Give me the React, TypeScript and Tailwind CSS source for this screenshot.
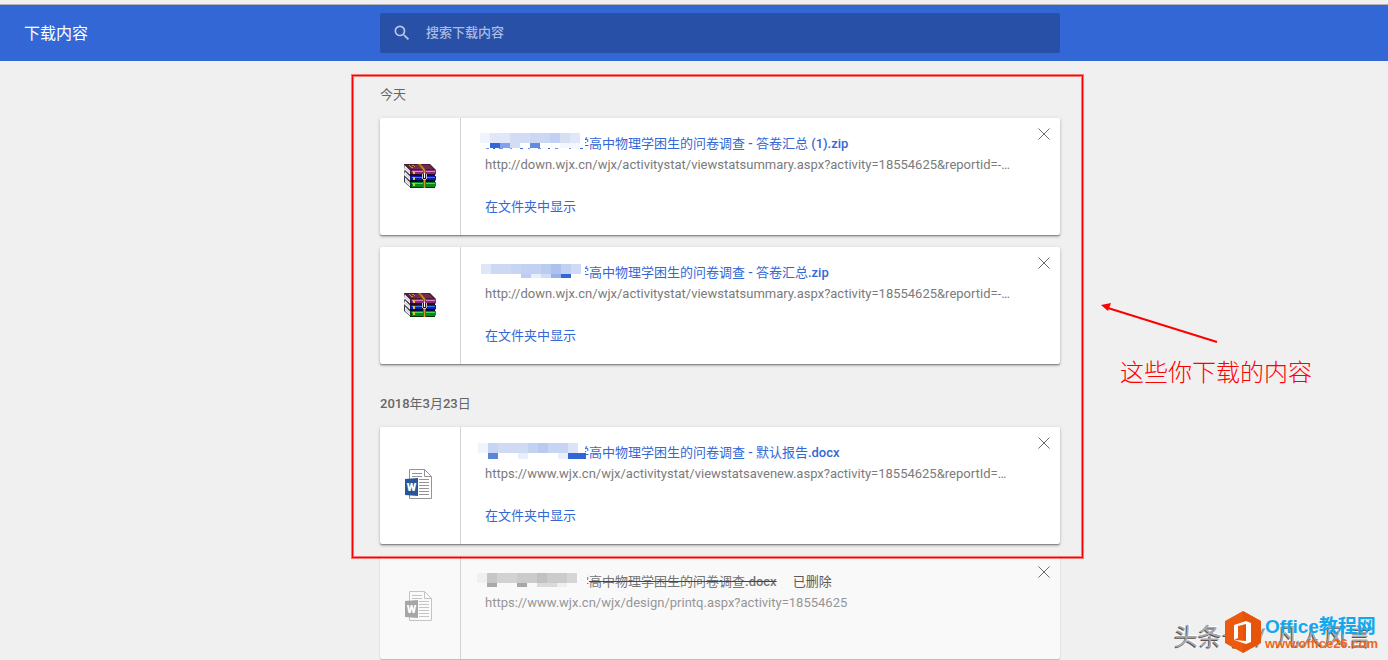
import clsx from 'clsx';

type FileKind = 'zip' | 'docx';

// [x, y, width, height, colour] of one block of the pixelated prefix
type Block = [number, number, number, number, string];

interface Download {
  id: number;
  kind: FileKind;
  name: string;
  url: string;
  blocks: Block[];
  removed?: boolean;
}

interface DownloadGroup {
  date: string;
  items: Download[];
}

const groups: DownloadGroup[] = [
  {
    date: '今天',
    items: [
      {
        id: 1,
        kind: 'zip',
        name: '高中物理学困生的问卷调查 - 答卷汇总 (1).zip',
        url: 'http://down.wjx.cn/wjx/activitystat/viewstatsummary.aspx?activity=18554625&reportid=-…',
        blocks: [
          [3, 1, 10, 10, '#f0f4fd'],
          [13, 1, 20, 10, '#e0e7f8'],
          [33, 1, 20, 10, '#d2dcf5'],
          [53, 1, 20, 10, '#cbd8f4'],
          [73, 1, 10, 10, '#c2d0f3'],
          [83, 1, 10, 10, '#d6e0f5'],
          [93, 1, 10, 10, '#e0e7f8'],
          [13, 11, 10, 5, '#3367d6'],
          [23, 11, 10, 5, '#84a2e5'],
          [33, 11, 10, 5, '#d2dcf5'],
          [53, 11, 10, 5, '#628be0'],
          [83, 11, 20, 5, '#f4f7fd'],
          [9, 16, 3, 1, '#6f93e2'],
          [16, 16, 2, 1, '#3367d6'],
          [22, 16, 4, 1, '#6f93e2'],
          [33, 16, 2, 1, '#6f93e2'],
          [43, 16, 3, 1, '#3367d6'],
          [51, 16, 2, 1, '#6f93e2'],
          [61, 16, 3, 1, '#6f93e2'],
          [71, 16, 2, 1, '#3367d6'],
          [78, 16, 3, 1, '#6f93e2'],
          [92, 16, 2, 1, '#6f93e2'],
          [103, 16, 3, 1, '#3367d6'],
        ],
      },
      {
        id: 2,
        kind: 'zip',
        name: '高中物理学困生的问卷调查 - 答卷汇总.zip',
        url: 'http://down.wjx.cn/wjx/activitystat/viewstatsummary.aspx?activity=18554625&reportid=-…',
        blocks: [
          [4, 3, 10, 10, '#dee6f8'],
          [14, 3, 20, 10, '#cdd9f4'],
          [34, 3, 10, 10, '#c7d4f3'],
          [44, 3, 20, 10, '#c2d0f2'],
          [64, 3, 10, 10, '#bacbf0'],
          [74, 3, 10, 10, '#acc1ee'],
          [84, 3, 10, 10, '#c2d0f2'],
          [94, 3, 10, 10, '#cfdaf5'],
          [44, 13, 10, 4, '#bccdf2'],
          [54, 13, 10, 4, '#e8eefb'],
          [64, 13, 10, 4, '#d2dcf6'],
          [74, 13, 10, 4, '#98b1e9'],
          [84, 13, 10, 4, '#3367d6'],
        ],
      },
    ],
  },
  {
    date: '2018年3月23日',
    items: [
      {
        id: 3,
        kind: 'docx',
        name: '高中物理学困生的问卷调查 - 默认报告.docx',
        url: 'https://www.wjx.cn/wjx/activitystat/viewstatsavenew.aspx?activity=18554625&reportId=…',
        blocks: [
          [1, 2, 10, 10, '#f0f4fd'],
          [11, 2, 10, 10, '#c7d4f3'],
          [21, 2, 30, 10, '#cfdaf5'],
          [51, 2, 10, 10, '#c4d2f2'],
          [61, 2, 10, 10, '#b8caf0'],
          [71, 2, 20, 10, '#c7d5f3'],
          [91, 2, 10, 10, '#dbe4f7'],
          [11, 12, 10, 6, '#5a85dd'],
          [41, 12, 10, 6, '#e8effb'],
          [81, 12, 10, 6, '#e8effb'],
          [91, 12, 18, 6, '#3367d6'],
        ],
      },
    ],
  },
];

const removedItem: Download = {
  id: 4,
  kind: 'docx',
  name: '高中物理学困生的问卷调查.docx',
  url: 'https://www.wjx.cn/wjx/design/printq.aspx?activity=18554625',
  removed: true,
  blocks: [
    [0, 3, 10, 10, '#f0f0f0'],
    [10, 3, 10, 10, '#c6c6c6'],
    [20, 3, 20, 10, '#d2d2d2'],
    [40, 3, 20, 10, '#cbcbcb'],
    [60, 3, 10, 10, '#c1c1c1'],
    [70, 3, 20, 10, '#cbcbcb'],
    [90, 3, 10, 10, '#d6d6d6'],
    [10, 13, 10, 4, '#a8a8a8'],
    [40, 13, 10, 4, '#a8a8a8'],
    [60, 13, 20, 4, '#dadada'],
    [80, 13, 10, 4, '#efefef'],
  ],
};

function SearchIcon() {
  return (
    <svg viewBox="0 0 24 24" className="size-5 shrink-0 fill-[#b9c8e8]" aria-hidden="true">
      <path d="M15.5 14h-.79l-.28-.27A6.471 6.471 0 0 0 16 9.5 6.5 6.5 0 1 0 9.5 16c1.61 0 3.09-.59 4.23-1.57l.27.28v.79l5 4.99L20.49 19l-4.99-5zm-6 0C7.01 14 5 11.99 5 9.5S7.01 5 9.5 5 14 7.01 14 9.5 11.99 14 9.5 14z" />
    </svg>
  );
}

function ZipIcon() {
  return (
    <svg viewBox="0 -5 32 32" className="size-8" aria-hidden="true">
      {/* page edges */}
      <path d="M0 0h2l5 6v18L0 18V12l1-1-1-4 1-1z" fill="#3b3b46" />
      <path d="M1 1.5l5 5v4L1 6zM1 7.5l5 5v4L1 12zM1 13.5l5 5v4L1 18z" fill="#f1f3f8" />
      <path d="M1.5 4l4.5 4.5M1.5 10l4.500 4.500M1.500 16l4.500 4.500" stroke="#b9bfcc" strokeWidth="1" />
      {/* top cover */}
      <path d="M0 0h26l6 6H6z" fill="#4b1b30" />
      <path d="M3 1h22l4 4H7z" fill="#6e2c4e" />
      <path d="M5 1h1v1h1v1h2v1H7V3H6V2H5zM8 1h2v1h1v1h-1V2H8z" fill="#c08c35" />
      {/* spines */}
      <path d="M6 6h26v4l-1 1H6z" fill="#8b2a7c" />
      <path d="M7 7h24v1H7z" fill="#e07ed2" />
      <path d="M6 10h25v2H6z" fill="#28081f" />
      <path d="M6 12h26v4l-1 1H6z" fill="#0b1fb5" />
      <path d="M7 13h24v1H7z" fill="#3c78f5" />
      <path d="M6 16h25v2H6z" fill="#030a3a" />
      <path d="M6 18h26v4l-1 1H6z" fill="#0a8a17" />
      <path d="M7 19h24v1H7z" fill="#49d84f" />
      <path d="M6 23h25v1H6z" fill="#043208" />
      <path d="M6 6h2v4H6zM6 12h2v4H6zM6 18h2v5H6z" fill="#1c1420" opacity=".6" />
      <path d="M9 7h2v3H9zM9 13h2v3H9zM9 19h2v3H9z" fill="#e4bd45" />
      {/* belt and buckle */}
      <path d="M13 0h4l5 6v18h-3V7z" fill="#8a5215" />
      <path d="M15 0h1l5 6v18h-1V7z" fill="#d0943a" />
      <path d="M18 10h5v6h-5z" fill="#1f1f1f" />
      <path d="M18 10h1v5h-1zM22 10h1v5h-1zM19 15h3v1h-3z" fill="#c4c4c4" />
      <path d="M20 9h1v5h-1z" fill="#fff" />
    </svg>
  );
}

function WordIcon({ faded }: { faded?: boolean }) {
  const line = faded ? '#c4c4c4' : '#949494';
  return (
    <svg viewBox="-1 -1 32 32" className="size-8" aria-hidden="true">
      <path d="M4.5.5h15l7 7v22h-22z" fill={faded ? '#fafafa' : '#fff'} stroke={line} />
      <path d="M19.5.5v7h7" fill="none" stroke={line} />
      <path
        d="M7 4.5h10M7 7.5h10M14 10.5h10M14 13.5h10M14 16.5h10M14 19.5h10M14 22.5h10M14 25.5h10"
        stroke={line}
      />
      <path d="M0 10l13-1v18l-13-1z" fill={faded ? '#a6a6a6' : '#2a5699'} />
      <text x="6.5" y="22" textAnchor="middle" fontSize="11" fontWeight="900" fontFamily="Roboto, sans-serif" fill="#fff">
        W
      </text>
    </svg>
  );
}

function CloseIcon() {
  return (
    <svg viewBox="0 0 12 12" className="size-3" aria-hidden="true">
      <path d="M.5.5l11 11M11.5.5l-11 11" stroke="#6b6b6b" />
    </svg>
  );
}

/* Latin letters and digits in medium weight, Chinese in regular */
function MixedText({ text }: { text: string }) {
  return (
    <>
      {text.split(/([\u4e00-\u9fff]+)/).map((part, i) => (
        <span key={i} className={i % 2 ? 'font-normal' : 'font-medium'}>
          {part}
        </span>
      ))}
    </>
  );
}

/* First eight characters of the name, pixelated so that only the edge of the last shows */
function MaskedPrefix({ blocks, removed }: { blocks: Block[]; removed?: boolean }) {
  return (
    <span className="relative inline-block w-[104px] shrink-0 text-right">
      学
      <svg viewBox="0 0 110 22" className="absolute -top-px -left-2 h-[22px] w-[110px]" aria-hidden="true">
        <rect width={removed ? 110 : 108} height="22" fill={removed ? '#f9f9f9' : '#fff'} />
        {blocks.map(([x, y, w, h, fill], i) => (
          <rect key={i} x={x} y={y} width={w} height={h} fill={fill} shapeRendering="crispEdges" />
        ))}
      </svg>
    </span>
  );
}

function DownloadCard({ item }: { item: Download }) {
  return (
    <article
      className={clsx(
        'flex min-h-[103px] rounded-xs',
        item.removed
          ? 'bg-[#f9f9f9] shadow-[0_1px_1px_rgba(0,0,0,0.2),0_0_2px_rgba(0,0,0,0.1)]'
          : 'bg-white shadow-[0_1px_1px_rgba(0,0,0,0.3),0_2px_2px_rgba(0,0,0,0.14),0_1px_4px_rgba(0,0,0,0.14)]'
      )}
    >
      <div className="flex w-20 shrink-0 items-center justify-center pb-[3px]">
        {item.kind === 'zip' ? <ZipIcon /> : <WordIcon faded={item.removed} />}
      </div>
      <div className="flex min-w-0 flex-1 items-start border-l border-[#d3d3d3] pl-6">
        <div className="min-w-0 flex-1 pt-[15px]">
          <div className="flex leading-[22px]">
            {item.removed ? (
              <>
                <span className="flex text-[#757575]">
                  <MaskedPrefix blocks={item.blocks} removed />
                  <s className="decoration-[#444]">
                    <MixedText text={item.name} />
                  </s>
                </span>
                <span className="ml-4 text-[#5a5a5a]">已删除</span>
              </>
            ) : (
              <a href="#" className="flex whitespace-nowrap text-[#3367d6]">
                <MaskedPrefix blocks={item.blocks} />
                <span>
                  <MixedText text={item.name} />
                </span>
              </a>
            )}
          </div>
          <p className={clsx('truncate leading-5', item.removed ? 'text-[#969696]' : 'text-[#7b7b7b]')}>
            {item.url}
          </p>
          {!item.removed && (
            <a href="#" className="mt-[22px] mb-[18px] inline-block align-top leading-5 text-[#3367d6]">
              在文件夹中显示
            </a>
          )}
        </div>
        <button type="button" aria-label="从列表中移除" className="flex size-8 shrink-0 items-center justify-center">
          <CloseIcon />
        </button>
      </div>
    </article>
  );
}

function OfficeLogo() {
  return (
    <svg viewBox="0 0 36 42" width="36" height="42" className="shrink-0" aria-hidden="true">
      <path d="M18 0l18 10v22L18 42 0 32V10z" fill="#eb5a0e" />
      <path d="M18 0l18 10v22L18 42z" fill="#e04e08" opacity=".45" />
      <path d="M9 14l12-4 5 2v19l-5 2-12-4 12 1V13l-8 2v12l-4 2z" fill="#fff" />
    </svg>
  );
}

function Watermark() {
  return (
    <div className="absolute right-1.5 bottom-[7px]">
      <div className="absolute top-0 right-2.5 flex gap-2.5 text-2xl leading-[52px] whitespace-nowrap text-[#a8a8a8] [text-shadow:-1px_1px_0_#555,1px_-1px_0_#fff]">
        <span>头条号</span>
        <span>/</span>
        <span>凡人风言</span>
      </div>
      <div className="relative flex items-center gap-1">
        <OfficeLogo />
        <div className="w-[117px] pt-1 whitespace-nowrap">
          <div className="font-['Liberation_Sans','Noto_Sans_CJK_SC',sans-serif] text-[19px] leading-5 font-bold text-[#12a8f0]">
            Office教程网
          </div>
          <div className="font-['Liberation_Sans',sans-serif] text-[13px] leading-3.5 font-bold text-[#f2651c]">
            www.office26.com
          </div>
        </div>
      </div>
    </div>
  );
}

export default function App() {
  return (
    <div className="relative min-h-screen overflow-hidden bg-[#f0f0f0] font-[Roboto,'Noto_Sans_CJK_SC',sans-serif] text-[13px]">
      <div className="h-[5px] border-b border-[#b3b3b3]" />
      <header className="grid h-14 grid-cols-[380px_minmax(0,680px)_1fr] items-center bg-[#3367d6]">
        <h1 className="pt-0.5 pl-6 text-base text-white">下载内容</h1>
        <label className="flex h-10 items-center gap-3.5 rounded-xs bg-[#2850a7] pl-3">
          <SearchIcon />
          <input
            type="text"
            aria-label="搜索下载内容"
            placeholder="搜索下载内容"
            className="min-w-0 flex-1 bg-transparent leading-5 text-white outline-none placeholder:font-medium placeholder:text-[#a9bbe2]"
          />
        </label>
      </header>

      <div className="grid grid-cols-[380px_minmax(0,680px)_1fr]">
        <main className="col-start-2">
          <div className="relative flex flex-col gap-[30px] pt-6">
            {groups.map((group) => (
              <section key={group.date}>
                <h2 className="mb-[13px] leading-5 text-[#666]">
                  <MixedText text={group.date} />
                </h2>
                <div className="flex flex-col gap-3">
                  {group.items.map((item) => (
                    <DownloadCard key={item.id} item={item} />
                  ))}
                </div>
              </section>
            ))}
            {/* Highlight frame */}
            <div className="pointer-events-none absolute top-3.5 -right-[23px] -bottom-3.5 -left-7 z-10 border border-[#ff0000] shadow-[0_0_0_1px_rgba(255,0,0,0.5),inset_0_0_0_1px_rgba(255,0,0,0.5)]" />
          </div>
          <div className="mt-3">
            <DownloadCard item={removedItem} />
          </div>
        </main>

        <aside className="pt-60 pl-10 text-[#ff0000]">
          <svg viewBox="0 0 120 44" width="120" height="44" aria-hidden="true">
            <path d="M8 7l109 34" stroke="#f00" strokeWidth="2" />
            <path d="M1 4l10-2-3 8z" fill="#f00" />
          </svg>
          <p className="mt-3 pl-5 font-['Noto_Sans_CJK_SC',sans-serif] text-2xl leading-7 font-light whitespace-nowrap">
            这些你下载的内容
          </p>
        </aside>
      </div>

      <Watermark />
    </div>
  );
}
